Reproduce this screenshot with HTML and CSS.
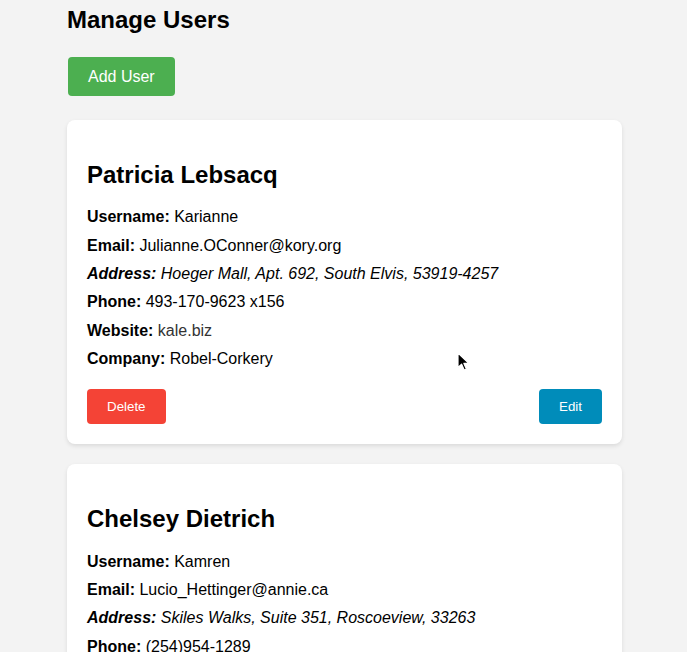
FILE: index.html
```html
<!DOCTYPE html>
<html lang="en">
<head>
<meta charset="utf-8">
<title>Manage Users</title>
<link rel="stylesheet" href="styles.css">
</head>
<body>
<div class="container">
  <h1 class="title">Manage Users</h1>
  <div class="toolbar"><button class="btn btn-add">Add User</button></div>

  <div class="card">
    <h2 class="name">Patricia Lebsacq</h2>
    <p class="row"><strong>Username:</strong> Karianne</p>
    <p class="row"><strong>Email:</strong> Julianne.OConner@kory.org</p>
    <p class="row address"><strong>Address:</strong> Hoeger Mall, Apt. 692, South Elvis, 53919-4257</p>
    <p class="row"><strong>Phone:</strong> 493-170-9623 x156</p>
    <p class="row"><strong>Website:</strong> <a class="link" href="#">kale.biz</a></p>
    <p class="row"><strong>Company:</strong> Robel-Corkery</p>
    <div class="actions">
      <button class="btn btn-small btn-delete">Delete</button>
      <button class="btn btn-small btn-edit">Edit</button>
    </div>
  </div>

  <div class="card">
    <h2 class="name">Chelsey Dietrich</h2>
    <p class="row"><strong>Username:</strong> Kamren</p>
    <p class="row"><strong>Email:</strong> Lucio_Hettinger@annie.ca</p>
    <p class="row address"><strong>Address:</strong> Skiles Walks, Suite 351, Roscoeview, 33263</p>
    <p class="row"><strong>Phone:</strong> (254)954-1289</p>
    <p class="row"><strong>Website:</strong> <a class="link" href="#">demarco.info</a></p>
    <p class="row"><strong>Company:</strong> Keebler LLC</p>
    <div class="actions">
      <button class="btn btn-small btn-delete">Delete</button>
      <button class="btn btn-small btn-edit">Edit</button>
    </div>
  </div>
</div>
<svg class="cursor" width="14" height="20" viewBox="0 0 14 20" aria-hidden="true">
  <path d="M1 1 L1 15.5 L4.6 12.2 L7.2 18 L9.4 17 L6.9 11.4 L11.8 11.4 Z" fill="#000" stroke="#fff" stroke-width="1.2" stroke-linejoin="round"/>
</svg>
</body>
</html>
```
FILE: styles.css
```css
html, body {
  margin: 0;
  padding: 0;
}
body {
  background: #f3f3f3;
  font-family: "Liberation Sans", Arial, sans-serif;
  color: #000;
  overflow: hidden;
}
.container {
  width: 555px;
  margin-left: 67px;
}
.title {
  font-size: 24px;
  line-height: 27.6px;
  font-weight: bold;
  margin: 6px 0 23px;
}
.toolbar {
  margin-bottom: 24px;
}
.btn {
  border: none;
  border-radius: 4px;
  color: #fff;
  font-family: "Liberation Sans", Arial, sans-serif;
  padding: 10px 20px;
  cursor: pointer;
}
.btn-add {
  background: #4caf50;
  font-size: 16px;
  line-height: 19px;
  margin-left: 1px;
}
.btn-small {
  font-size: 13.333px;
  line-height: 15.3px;
}
.btn-delete {
  background: #f44336;
}
.btn-edit {
  background: #008cba;
}
.card {
  background: #fff;
  border-radius: 8px;
  box-shadow: 0 2px 4px rgba(0, 0, 0, 0.1);
  padding: 20px;
  margin-bottom: 20px;
}
.name {
  font-size: 24px;
  line-height: 27.6px;
  font-weight: bold;
  margin: 21px 0 20px;
}
.row {
  font-size: 16px;
  line-height: 18.4px;
  margin: 10px 0;
}
.address {
  font-style: italic;
}
.link {
  color: #333;
  text-decoration: none;
}
.actions {
  display: flex;
  justify-content: space-between;
  margin-top: 20px;
}
.cursor {
  position: absolute;
  left: 457px;
  top: 352px;
}
```
